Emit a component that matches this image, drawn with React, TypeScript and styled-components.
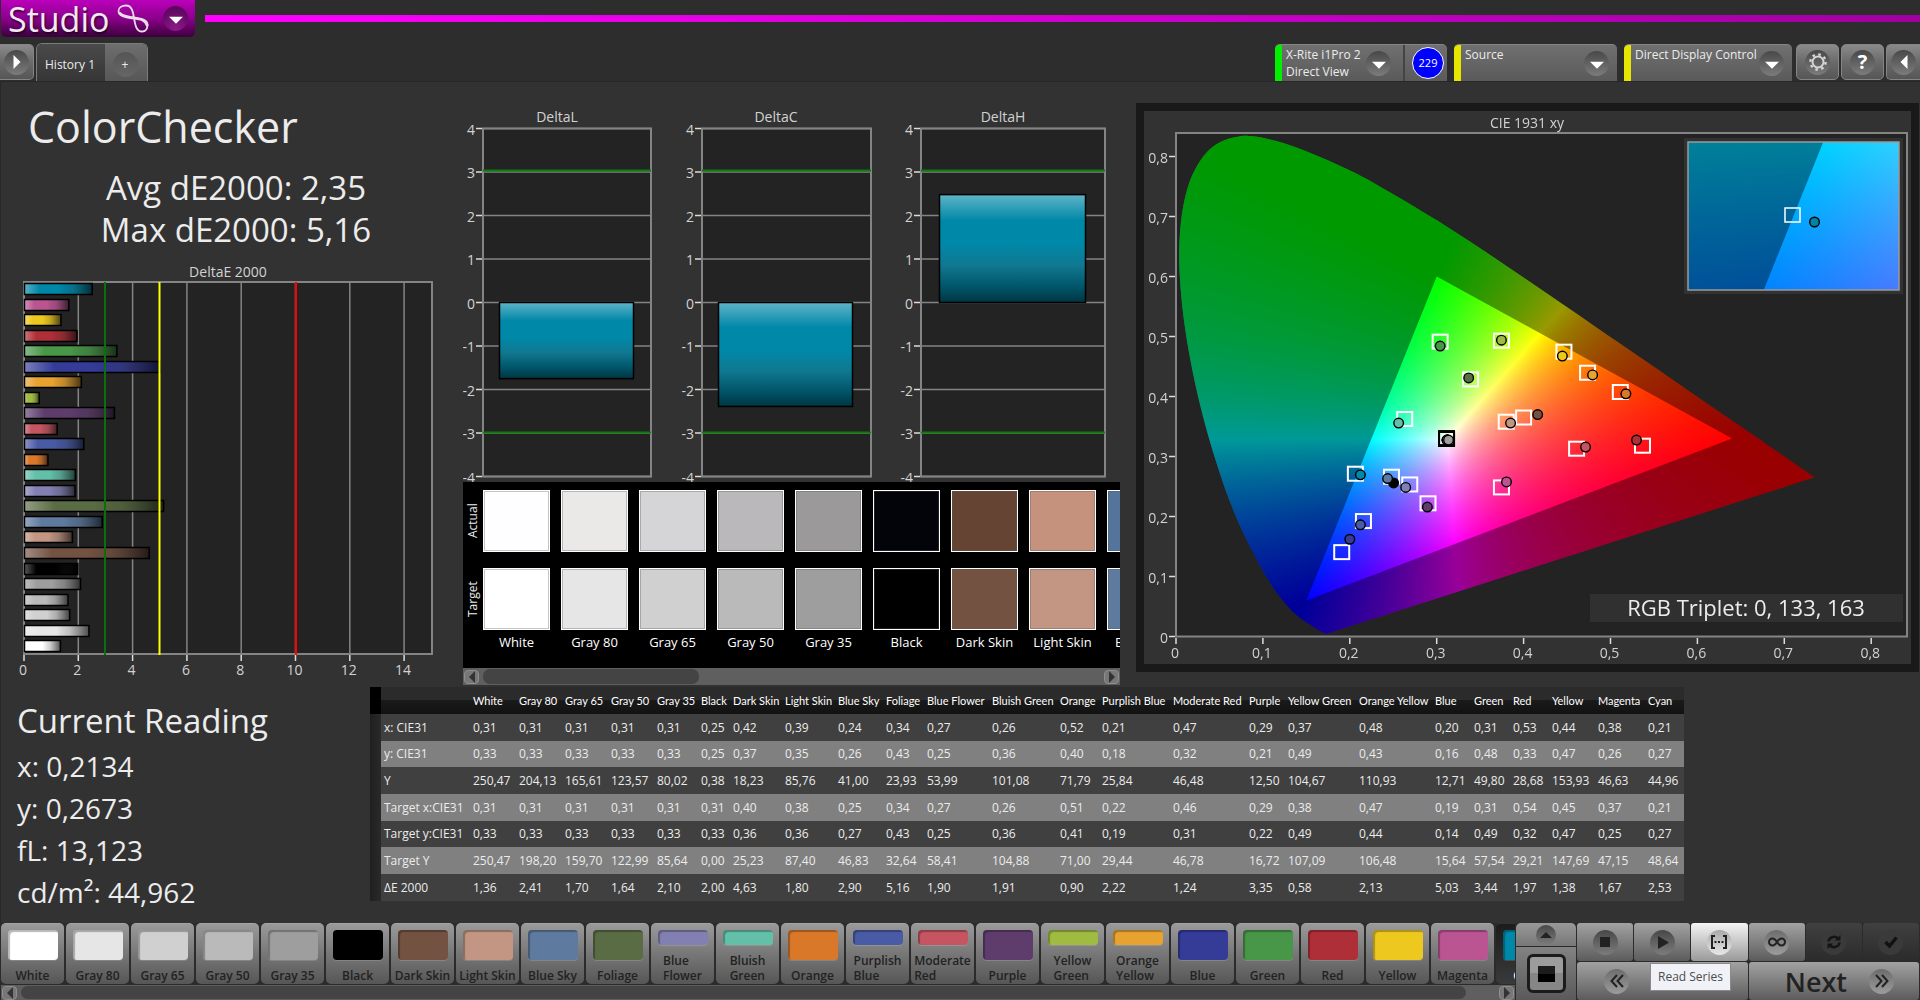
import React, { useLayoutEffect, useRef } from "react";
import styled, { createGlobalStyle, css } from "styled-components";

const FONT = `"Open Sans", "Noto Sans", "Liberation Sans", sans-serif`;

const GlobalStyle = createGlobalStyle`
  *, *::before, *::after { box-sizing: border-box; }
  body { margin: 0; background: #2d2d2d; color: #ececec; font-family: ${FONT}; }
  button { font-family: inherit; padding: 0; margin: 0; border: 0; cursor: pointer; color: inherit; }
  h1, h2, p { margin: 0; font-weight: 400; }
`;

/* ---------- data ---------- */

type Patch = {
  name: string;
  color: string;
  actual: string;
  target: [number, number];
  measured: [number, number];
  col: number;
  values: string[];
};

const p = (
  name: string,
  color: string,
  actual: string,
  target: [number, number],
  measured: [number, number],
  col: number,
  values: string
): Patch => ({ name, color, actual, target, measured, col, values: values.split(" ") });

const patches: Patch[] = [
  p("White", "#ffffff", "#fefdff", [0.3113, 0.3298], [0.312, 0.3274], 46, "0,31 0,33 250,47 0,31 0,33 250,47 1,36"),
  p("Gray 80", "#e6e6e6", "#ebe8e8", [0.3113, 0.3298], [0.312, 0.3274], 46, "0,31 0,33 204,13 0,31 0,33 198,20 2,41"),
  p("Gray 65", "#d0d0d0", "#d5d4d7", [0.3113, 0.3298], [0.312, 0.3274], 46, "0,31 0,33 165,61 0,31 0,33 159,70 1,70"),
  p("Gray 50", "#bababa", "#bab8bb", [0.3113, 0.3298], [0.312, 0.3274], 46, "0,31 0,33 123,57 0,31 0,33 122,99 1,64"),
  p("Gray 35", "#9e9e9e", "#9b9999", [0.3113, 0.3298], [0.3136, 0.3274], 44, "0,31 0,33 80,02 0,31 0,33 85,64 2,10"),
  p("Black", "#000000", "#03040a", [0.3113, 0.3298], [0.2504, 0.2559], 32, "0,25 0,25 0,38 0,31 0,33 0,00 2,00"),
  p("Dark Skin", "#735242", "#654434", [0.4, 0.365], [0.4162, 0.3699], 52, "0,42 0,37 18,23 0,40 0,36 25,23 4,63"),
  p("Light Skin", "#c29682", "#c5927e", [0.38, 0.358], [0.385, 0.3557], 53, "0,39 0,35 85,76 0,38 0,36 87,40 1,80"),
  p("Blue Sky", "#5e7b9f", "#55749c", [0.248, 0.2663], [0.2435, 0.2633], 48, "0,24 0,26 41,00 0,25 0,27 46,83 2,90"),
  p("Foliage", "#5a6c43", "#55683f", [0.339, 0.4285], [0.3368, 0.431], 41, "0,34 0,43 23,93 0,34 0,43 32,64 5,16"),
  p("Blue Flower", "#8280b2", "#7d7cb0", [0.269, 0.2534], [0.2643, 0.2485], 65, "0,27 0,25 53,99 0,27 0,25 58,41 1,90"),
  p("Bluish Green", "#64bfa9", "#60bba8", [0.2632, 0.3625], [0.2562, 0.3557], 68, "0,26 0,36 101,08 0,26 0,36 104,88 1,91"),
  p("Orange", "#d97829", "#d97829", [0.5113, 0.4075], [0.5177, 0.4044], 42, "0,52 0,40 71,79 0,51 0,41 71,00 0,90"),
  p("Purplish Blue", "#4a5ba5", "#4456a2", [0.2157, 0.1924], [0.2122, 0.1862], 71, "0,21 0,18 25,84 0,22 0,19 29,44 2,22"),
  p("Moderate Red", "#c45561", "#c45561", [0.461, 0.313], [0.4713, 0.3157], 76, "0,47 0,32 46,48 0,46 0,31 46,78 1,24"),
  p("Purple", "#5e3d6c", "#56365f", [0.29, 0.222], [0.2893, 0.2158], 39, "0,29 0,21 12,50 0,29 0,22 16,72 3,35"),
  p("Yellow Green", "#a0bb42", "#a0bb42", [0.3745, 0.493], [0.3745, 0.4938], 71, "0,37 0,49 104,67 0,38 0,49 107,09 0,58"),
  p("Orange Yellow", "#e7a22f", "#e7a22f", [0.4736, 0.4396], [0.4794, 0.4359], 76, "0,48 0,43 110,93 0,47 0,44 106,48 2,13"),
  p("Blue", "#343c98", "#343c98", [0.1907, 0.1406], [0.2, 0.1621], 39, "0,20 0,16 12,71 0,19 0,14 15,64 5,03"),
  p("Green", "#489648", "#489648", [0.304, 0.4914], [0.304, 0.484], 39, "0,31 0,48 49,80 0,31 0,49 57,54 3,44"),
  p("Red", "#af2f38", "#af2f38", [0.5368, 0.318], [0.5299, 0.3274], 39, "0,53 0,33 28,68 0,54 0,32 29,21 1,97"),
  p("Yellow", "#edc91f", "#edc91f", [0.4464, 0.4747], [0.4446, 0.4673], 46, "0,44 0,47 153,93 0,45 0,47 147,69 1,38"),
  p("Magenta", "#bb5592", "#bb5592", [0.3745, 0.2485], [0.3803, 0.2577], 50, "0,38 0,26 46,63 0,37 0,25 47,15 1,67"),
  p("Cyan", "#0088a8", "#0085a3", [0.2064, 0.2713], [0.2122, 0.2694], 39, "0,21 0,27 44,96 0,21 0,27 48,64 2,53"),
];

const rowLabels = ["x: CIE31", "y: CIE31", "Y", "Target x:CIE31", "Target y:CIE31", "Target Y", "ΔE 2000"];

const deltaE = (patch: Patch) => parseFloat(patch.values[6].replace(",", "."));

/* ---------- shell ---------- */

const Shell = styled.div`
  min-height: 100vh;
  display: flex;
  flex-direction: column;
  overflow: hidden;
  background: #2d2d2d;
`;

const TopBar = styled.header`
  display: flex;
  height: 43px;
  padding-left: 1px;
`;

const Brand = styled.button`
  display: flex;
  align-items: center;
  width: 194px;
  height: 37px;
  padding-left: 7px;
  border-radius: 0 0 5px 5px;
  background: linear-gradient(#bb00bb, #8b008b 50%, #3c003c);
  color: #f3e9f3;
  font-size: 34px;
  line-height: 36px;
  text-shadow: 1px 2px 2px rgba(0, 0, 0, 0.6);
`;

const BrandMark = styled.svg`
  width: 32px;
  height: 30px;
  margin: 0 14px 0 8px;
  flex: none;
`;

const Accent = styled.div`
  flex: 1;
  height: 7px;
  margin: 15px 0 0 10px;
  background: linear-gradient(90deg, #ff00ff, #a000a0);
`;

const TabRow = styled.nav`
  display: flex;
  height: 38px;
  align-items: stretch;
`;

const raised = css`
  border: 1px solid #858585;
  background: linear-gradient(#8a8a8a, #6a6a6a 50%, #565656);
`;

const Round = styled.span<{ $tone?: string }>`
  display: inline-flex;
  align-items: center;
  justify-content: center;
  flex: none;
  width: 25px;
  height: 25px;
  border-radius: 50%;
  background: ${(q) => q.$tone ?? "linear-gradient(#484848, #7c7c7c)"};
`;

const SquareButton = styled.button<{ $edge?: "left" | "right" }>`
  ${raised}
  display: flex;
  align-items: center;
  justify-content: center;
  height: 36px;
  margin-top: 1px;
  width: ${(q) => (q.$edge ? 34 : 43)}px;
  border-radius: ${(q) => (q.$edge === "left" ? "0 5px 5px 0" : q.$edge === "right" ? "5px 0 0 5px" : "5px")};
  ${(q) => q.$edge === "left" && "border-left: 0;"}
  ${(q) => q.$edge === "right" && "border-right: 0;"}
`;

const Tabs = styled.div`
  display: flex;
  margin-left: 2px;
  border: 1px solid #7c7c7c;
  border-bottom: 0;
  border-radius: 6px 6px 0 0;
  overflow: hidden;
`;

const Tab = styled.button<{ $active?: boolean }>`
  width: ${(q) => (q.$active ? 68 : 42)}px;
  padding: 3px 2px 0 0;
  font-size: 12px;
  white-space: nowrap;
  background: ${(q) => (q.$active ? "linear-gradient(#4a4a4a, #363636)" : "linear-gradient(#6e6e6e, #575757)")};
`;

const Devices = styled.div`
  display: flex;
  gap: 7px;
  margin-left: auto;
  margin-right: 4px;
`;

const Device = styled.div<{ $led: string; $w: number }>`
  display: flex;
  width: ${(q) => q.$w}px;
  margin-top: 1px;
  border-top: 1px solid #858585;
  border-radius: 5px 5px 0 0;
  overflow: hidden;
  background: linear-gradient(90deg, ${(q) => q.$led} 7px, transparent 7px), linear-gradient(#707070, #5a5a5a);
`;

const DeviceButton = styled.button<{ $inset: number }>`
  display: flex;
  flex: 1;
  justify-content: space-between;
  padding: 1px ${(q) => q.$inset}px 0 11px;
  background: none;
  font-size: 12px;
  line-height: 17px;
  text-align: left;
  white-space: nowrap;
`;

const DeviceArrow = styled(Round)`
  margin-top: 5px;
`;

const Counter = styled.button`
  display: flex;
  align-items: center;
  width: 44px;
  padding-left: 7px;
  border-left: 2px solid #444;
  background: none;

  span {
    width: 32px;
    height: 32px;
    border: 1px solid #fff;
    border-radius: 50%;
    background: #0000ff;
    color: #fff;
    font-size: 11px;
    line-height: 30px;
    text-align: center;
  }
`;

const Tools = styled.div`
  display: flex;
  gap: 2px;
`;

const Main = styled.main`
  flex: 1;
  border: 1px solid #282828;
  border-width: 1px 0 0 1px;
  background: #323232;
`;

const Charts = styled.div`
  display: grid;
  grid-template-columns: minmax(0, 462fr) minmax(0, 673fr) minmax(0, 784fr);
`;

const Title = styled.h1`
  margin: 21px 0 0 27px;
  font-size: 43px;
  line-height: 48px;
`;

const Stats = styled.div`
  padding: 16px 0 11px 8px;
  font-size: 33px;
  line-height: 42px;
  text-align: center;
`;

const Plot = styled.svg`
  display: block;
  width: 100%;
  height: auto;
  font-family: ${FONT};
  font-size: 14px;
`;

/* ---------- swatch strip ---------- */

const StripPanel = styled.div`
  margin-right: 16px;
  background: #000;
`;

const StripBody = styled.div`
  display: flex;
  height: 186px;
  overflow: hidden;
`;

const StripLabels = styled.div`
  display: flex;
  flex-direction: column;
  flex: none;
  width: 20px;
  gap: 16px;
  padding-top: 8px;
  font-size: 12px;

  span {
    height: 62px;
    line-height: 20px;
    writing-mode: vertical-rl;
    rotate: 180deg;
    text-align: center;
  }
`;

const StripItem = styled.div`
  display: flex;
  flex-direction: column;
  align-items: center;
  flex: none;
  width: 78px;
  padding: 8px 11px 0 0;
  gap: 16px;
  font-size: 13px;
  line-height: 18px;
  white-space: nowrap;
  color: #fff;
`;

const Chip = styled.div<{ $c: string }>`
  width: 67px;
  height: 62px;
  border: 1px solid #fff;
  box-shadow: inset 0 0 0 1px rgba(90, 90, 90, 0.35);
  background: ${(q) => q.$c};
`;

const ChipName = styled.span`
  margin-top: -13px;
`;

const ScrollTrack = styled.div<{ $h: number }>`
  display: flex;
  align-items: center;
  height: ${(q) => q.$h}px;
  padding: 0 1px;
  background: #5f5f5f;
`;

const ScrollArrow = styled.button`
  display: flex;
  align-items: center;
  justify-content: center;
  flex: none;
  width: 15px;
  height: 14px;
  border: 1px solid #8e8e8e;
  border-radius: 4px;
  background: #777;
`;

const ScrollLane = styled.div`
  flex: 1;
  height: 100%;
  padding: 1px 4px;
`;

const ScrollThumb = styled.div<{ $share: number }>`
  width: ${(q) => q.$share}%;
  height: 100%;
  border-radius: 7px;
  background: #444;
`;

/* ---------- CIE ---------- */

const CiePanel = styled.section`
  display: grid;
  align-self: start;
  margin: 21px 1px 0 0;
  border: 8px solid #191919;
  background: #323232;
`;

const CieCanvas = styled.canvas`
  grid-area: 1 / 1;
  width: 100%;
  height: auto;
`;

const CiePlot = styled(Plot)`
  grid-area: 1 / 1;
`;

/* ---------- readings and table ---------- */

const Lower = styled.div`
  display: grid;
  grid-template-columns: minmax(0, 369fr) minmax(0, 1314fr) minmax(0, 236fr);
  align-items: start;
`;

const Readings = styled.section`
  padding: 13px 0 8px 16px;
  font-size: 28px;
  line-height: 42px;
`;

const ReadingsTitle = styled.h2`
  margin-bottom: 3px;
  font-size: 33px;
  line-height: 42px;
`;

const DataTable = styled.table`
  width: 100%;
  table-layout: fixed;
  border-collapse: collapse;
  font-size: 12px;
  line-height: 16px;

  th, td {
    height: 27px;
    padding: 0 0 0 3px;
    text-align: left;
    font-weight: 400;
    white-space: nowrap;
  }
  tbody tr:nth-child(3n + 2) > * { height: 26px; }
  thead th {
    font-family: Lato, ${FONT};
    font-size: 11px;
    color: #fff;
  }
  thead tr { background: linear-gradient(#2b2b2b 50%, #1a1a1a 50%, #121212); }
  tbody tr { background: #404040; }
  tbody tr:nth-child(even) { background: #808080; }
  thead td { background: #000; }
  tbody td:first-child { background: linear-gradient(90deg, #1f1f1f, #2a2a2a); }
`;

/* ---------- bottom bar ---------- */

const Bottom = styled.footer`
  display: flex;
  height: 77px;
  gap: 1px;
  background: #2b2b2b;
`;

const PatchArea = styled.div`
  flex: 1;
  min-width: 0;
  display: flex;
  flex-direction: column;
  padding-left: 1px;
`;

const PatchRow = styled.div`
  display: flex;
  height: 62px;
  gap: 2px;
  overflow: hidden;
`;

const PatchButton = styled.button<{ $on: boolean }>`
  display: flex;
  flex-direction: column;
  align-items: center;
  justify-content: space-between;
  flex: none;
  width: 63px;
  height: 61px;
  padding: 6px 0 1px;
  border-top: 1px solid ${(q) => (q.$on ? "#333" : "#a5a5a5")};
  border-radius: 5px;
  background: ${(q) => (q.$on ? "linear-gradient(#1c1c1c, #3a3a3a)" : "linear-gradient(#9a9a9a, #777 50%, #565656)")};
  color: ${(q) => (q.$on ? "#fff" : "#222")};
  font-size: 12px;
  font-weight: 600;
  line-height: 15px;
  text-align: left;
  white-space: pre;
`;

const PatchChip = styled.span<{ $c: string; $half: boolean }>`
  width: 50px;
  height: ${(q) => (q.$half ? 15 : 30)}px;
  border-radius: 4px;
  background: ${(q) => q.$c};
  box-shadow: inset 2px 2px 1px rgba(0, 0, 0, 0.28), 0 1px 0 rgba(255, 255, 255, 0.15);
`;

const Pad = styled.div`
  display: flex;
  flex-direction: column;
  gap: 1px;
  width: 60px;
`;

const PadUp = styled.button`
  height: 23px;
  border-radius: 5px 5px 0 0;
  background: linear-gradient(#999, #777);
`;

const SmallRound = styled(Round)`
  width: 20px;
  height: 20px;
`;

const PadStop = styled.button`
  display: flex;
  align-items: center;
  justify-content: center;
  flex: 1;
  background: linear-gradient(#828282, #5a5a5a);

  span {
    width: 39px;
    height: 39px;
    padding: 9px 8px;
    border: 3px solid #1b1b1b;
    border-radius: 6px;
    background: linear-gradient(#9c9c9c 50%, #868686 50%);
  }
  span::before {
    content: "";
    display: block;
    width: 17px;
    height: 16px;
    background: linear-gradient(#1c1c1c 50%, #000 50%);
  }
`;

const Transport = styled.div`
  position: relative;
  display: grid;
  grid-template-columns: repeat(6, 1fr);
  grid-template-rows: 38px 38px;
  gap: 1px;
  width: 343px;
  padding-right: 1px;
`;

const Key = styled.button<{ $kind?: "hot" | "off" }>`
  display: flex;
  align-items: center;
  justify-content: center;
  border-radius: 3px;
  background: ${(q) =>
    q.$kind === "hot"
      ? "linear-gradient(#f4f4f4, #9a9a9a)"
      : q.$kind === "off"
        ? "linear-gradient(#404040, #2b2b2b)"
        : "linear-gradient(#a2a2a2, #5c5c5c)"};
`;

const WideKey = styled(Key)<{ $end?: boolean }>`
  grid-column: span 3;
  justify-content: ${(q) => (q.$end ? "flex-end" : "flex-start")};
  gap: 22px;
  padding: 0 25px 0 27px;
  color: #222;
  font-size: 27px;
  font-weight: 600;
`;

const Tip = styled.div`
  position: absolute;
  left: 73px;
  top: 40px;
  width: 81px;
  border: 1px solid #8a8a8a;
  background: #f1f2f8;
  color: #4c4c4c;
  font-size: 12px;
  line-height: 26px;
  text-align: center;
`;

/* ---------- icons ---------- */

const Tri = ({ dir, size = 14, fill = "#fff" }: { dir: "up" | "down" | "left" | "right"; size?: number; fill?: string }) => {
  const shapes = { up: "0,9 12,9 6,3", down: "0,4 12,4 6,10", left: "9,0 9,12 3,6", right: "3,0 3,12 9,6" };
  return (
    <svg width={size} height={size} viewBox="0 0 12 12" aria-hidden="true">
      <polygon points={shapes[dir]} fill={fill} />
    </svg>
  );
};

const Gear = () => (
  <svg width="20" height="20" viewBox="0 0 20 20" fill="none" stroke="#d6d6d6" aria-hidden="true">
    <circle cx="10" cy="10" r="5.500" strokeWidth="2" />
    <circle cx="10" cy="10" r="7.600" strokeWidth="2.400" strokeDasharray="2.600 3.370" />
  </svg>
);

const Help = styled.span`
  color: #fff;
  font-size: 20px;
  font-weight: 700;
  line-height: 24px;
`;

const Glyph = ({ kind }: { kind: "stop" | "play" | "series" | "loop" | "refresh" | "check" | "prev" | "next" }) => (
  <svg width="18" height="18" viewBox="0 0 18 18" fill="none" stroke="#222" strokeWidth="2" aria-hidden="true">
    {kind === "stop" && <rect x="4" y="4" width="10" height="10" fill="#222" stroke="none" />}
    {kind === "play" && <polygon points="5,3 16,9.5 5,16" fill="#222" stroke="none" />}
    {kind === "series" && (
      <>
        <path d="M5 3H2V15H5M13 3H16V15H13" />
        <path d="M4.5 9H13.5" strokeWidth="2" strokeDasharray="2 1.5" />
      </>
    )}
    {kind === "loop" && (
      <path d="M9 9C7.5 6.5 6.2 5.5 4.5 5.5A3.5 3.5 0 0 0 4.5 12.5C6.2 12.5 7.5 11.5 9 9C10.5 6.5 11.8 5.5 13.5 5.5A3.5 3.5 0 0 1 13.5 12.5C11.8 12.5 10.5 11.5 9 9Z" />
    )}
    {kind === "refresh" && (
      <g stroke="#141414" strokeWidth="2.5">
        <path d="M3.5 8.5A5.5 5 0 0 1 13 5.5M14.5 9.5A5.5 5 0 0 1 5 12.5" />
        <path d="M15.5 2V7.5H10ZM2.5 16V10.5H8Z" fill="#141414" stroke="none" />
      </g>
    )}
    {kind === "check" && <path d="M3.5 9L7.5 13L14.5 4.5" stroke="#111" strokeWidth="3.5" />}
    {kind === "prev" && <path d="M9 3L3.5 9L9 15M15 3L9.5 9L15 15" />}
    {kind === "next" && <path d="M3 3L8.5 9L3 15M9 3L14.5 9L9 15" />}
  </svg>
);

/* ---------- charts ---------- */

const GRID = "#848484";
const LABEL = "#d2d2d2";

const DeltaEChart = () => {
  const x0 = 24;
  const unit = 27.15;
  return (
    <Plot viewBox="1 262 462 425" role="img" aria-label="DeltaE 2000">
      <defs>
        <linearGradient id="sheenH">
          <stop offset="0" stopColor="#fff" stopOpacity="0.35" />
          <stop offset="0.22" stopColor="#fff" stopOpacity="0" />
          <stop offset="0.5" stopColor="#000" stopOpacity="0" />
          <stop offset="0.7" stopColor="#222" stopOpacity="0.2" />
          <stop offset="1" stopColor="#000" stopOpacity="0.68" />
        </linearGradient>
      </defs>
      <text x="228" y="277" textAnchor="middle" fill={LABEL}>DeltaE 2000</text>
      <rect x={x0} y="282" width="408" height="372" fill="#232323" stroke={GRID} strokeWidth="2" />
      {[0, 2, 4, 6, 8, 10, 12, 14].map((v) => (
        <g key={v}>
          {v > 0 && <path d={`M${x0 + v * unit} 282V654`} stroke={GRID} strokeWidth="1.5" />}
          <path d={`M${x0 + v * unit} 655V661`} stroke="#ddd" strokeWidth="1.5" />
          <text x={x0 - 1 + v * unit} y="675" textAnchor="middle" fill={LABEL}>{v}</text>
        </g>
      ))}
      {[...patches].reverse().map((patch, i) => {
        const box = { x: x0 + 0.5, y: Math.round(283 + i * 15.53) + 0.5, width: deltaE(patch) * unit - 1, height: 11 };
        return (
          <g key={patch.name}>
            <rect {...box} fill={patch.color} />
            <rect {...box} fill="url(#sheenH)" stroke="#000" strokeWidth="1.5" />
          </g>
        );
      })}
      <path d="M105 282V655" stroke="#0b700b" strokeWidth="2" />
      <path d="M159.5 282V655" stroke="#ffff00" strokeWidth="2" />
      <path d="M296 282V655" stroke="#ff0000" strokeWidth="2" />
    </Plot>
  );
};

const deltas = [
  { name: "DeltaL", x: 483, w: 168, bar: 499, barW: 134, v: -1.75, cx: 557 },
  { name: "DeltaC", x: 702, w: 169, bar: 718, barW: 134, v: -2.39, cx: 776 },
  { name: "DeltaH", x: 921, w: 184, bar: 939, barW: 146, v: 2.48, cx: 1003 },
];

const DeltaCharts = () => {
  const y = (v: number) => 302.5 - v * 43.5;
  return (
    <Plot viewBox="463 82 673 400" role="img" aria-label="DeltaL, DeltaC and DeltaH">
      <defs>
        <linearGradient id="sheenV" x1="0" y1="0" x2="0" y2="1">
          <stop offset="0" stopColor="#5fb4c8" />
          <stop offset="0.24" stopColor="#0088a8" />
          <stop offset="0.46" stopColor="#0088a8" />
          <stop offset="0.66" stopColor="#107890" />
          <stop offset="0.86" stopColor="#005468" />
          <stop offset="1" stopColor="#003542" />
        </linearGradient>
      </defs>
      {deltas.map((d) => (
        <g key={d.name}>
          <text x={d.cx} y="122" textAnchor="middle" fill={LABEL}>{d.name}</text>
          <rect x={d.x} y={y(4)} width={d.w} height={348} fill="#232323" stroke={GRID} strokeWidth="2" />
          {[4, 3, 2, 1, 0, -1, -2, -3, -4].map((v) => (
            <g key={v}>
              <path d={`M${d.x} ${y(v)}H${d.x + d.w}`} stroke={GRID} strokeWidth="1.5" />
              <path d={`M${d.x - 7} ${y(v)}H${d.x - 1}`} stroke="#ddd" strokeWidth="1.5" />
              <text x={d.x - 8} y={y(v) + 6} textAnchor="end" fill={LABEL}>{v}</text>
            </g>
          ))}
          <path d={`M${d.x} 170.5H${d.x + d.w}M${d.x} 432.5H${d.x + d.w}`} stroke="#0a7d0a" strokeWidth="2" />
          <rect
            x={d.bar + 0.5}
            y={Math.min(y(0), y(d.v))}
            width={d.barW}
            height={Math.abs(d.v) * 43.5}
            fill="url(#sheenV)"
            stroke="#000"
            strokeWidth="1.5"
          />
        </g>
      ))}
    </Plot>
  );
};

/* Spectral locus of the 1931 standard observer, as x,y pairs. */
const locus = [
  0.1741, 0.005, 0.1714, 0.0051, 0.1689, 0.0069, 0.1644, 0.0109, 0.1566, 0.0177, 0.144, 0.0297, 0.1355, 0.0399,
  0.1241, 0.0578, 0.1096, 0.0868, 0.0913, 0.1327, 0.0687, 0.2007, 0.0454, 0.295, 0.0235, 0.4127, 0.0082, 0.5384,
  0.0039, 0.6548, 0.0139, 0.7502, 0.0389, 0.812, 0.0743, 0.8338, 0.1142, 0.8262, 0.1547, 0.8059, 0.1929, 0.7816,
  0.2296, 0.7543, 0.3016, 0.6923, 0.3731, 0.6245, 0.4441, 0.5547, 0.5125, 0.4866, 0.5752, 0.4242, 0.627, 0.3725,
  0.6658, 0.334, 0.6915, 0.3083, 0.719, 0.2809, 0.7347, 0.2653,
];
const gamut = [[0.64, 0.33], [0.3, 0.6], [0.15, 0.06]];

type View = {
  left: number;
  top: number;
  w: number;
  h: number;
  toPx: (x: number, y: number) => [number, number];
  toXy: (px: number, py: number) => [number, number];
};

const makeView = (left: number, top: number, w: number, h: number, ox: number, oy: number, sx: number, sy: number): View => ({
  left, top, w, h,
  toPx: (x, y) => [ox + x * sx, oy - y * sy],
  toXy: (px, py) => [(px - ox) / sx, (oy - py) / sy],
});

/* Canvas coordinates start at the panel's inner corner. */
const mainView = makeView(32, 22, 731, 504, 32, 525.5, 869, 600);
const insetView = makeView(544, 31, 211, 148, 649.5 - 0.2092 * 3560, 105 + 0.2731 * 2460, 3560, 2460);

const chromaColor = (x: number, y: number) => {
  const yy = Math.max(y, 0.001);
  const X = x / yy;
  const Z = (1 - x - yy) / yy;
  const r = Math.max(0, 3.2406 * X - 1.5372 - 0.4986 * Z);
  const g = Math.max(0, -0.9689 * X + 1.8758 + 0.0415 * Z);
  const b = Math.max(0, 0.0557 * X - 0.204 + 1.057 * Z);
  const m = Math.max(r, g, b) || 1;
  return [(255 * r) / m, (255 * g) / m, (255 * b) / m];
};

const paintView = (ctx: CanvasRenderingContext2D, view: View) => {
  const field = document.createElement("canvas");
  field.width = view.w;
  field.height = view.h;
  const fctx = field.getContext("2d");
  if (!fctx) return;
  const image = fctx.createImageData(view.w, view.h);
  for (let j = 0; j < view.h; j++) {
    for (let i = 0; i < view.w; i++) {
      const [x, y] = view.toXy(view.left + i + 0.5, view.top + j + 0.5);
      const [r, g, b] = chromaColor(x, y);
      const k = 4 * (j * view.w + i);
      image.data[k] = r;
      image.data[k + 1] = g;
      image.data[k + 2] = b;
      image.data[k + 3] = 255;
    }
  }
  fctx.putImageData(image, 0, 0);

  ctx.save();
  ctx.beginPath();
  ctx.rect(view.left, view.top, view.w, view.h);
  ctx.fillStyle = "#232323";
  ctx.fill();
  ctx.clip();

  const pts: [number, number][] = [];
  for (let i = 0; i < locus.length; i += 2) pts.push(view.toPx(locus[i], locus[i + 1]));
  ctx.beginPath();
  ctx.moveTo(...pts[0]);
  for (let i = 0; i < pts.length - 1; i++) {
    const a = pts[Math.max(0, i - 1)];
    const b = pts[i];
    const c = pts[i + 1];
    const d = pts[Math.min(pts.length - 1, i + 2)];
    ctx.bezierCurveTo(b[0] + (c[0] - a[0]) / 6, b[1] + (c[1] - a[1]) / 6, c[0] - (d[0] - b[0]) / 6, c[1] - (d[1] - b[1]) / 6, c[0], c[1]);
  }
  ctx.closePath();
  ctx.clip();
  ctx.drawImage(field, view.left, view.top);

  ctx.beginPath();
  ctx.rect(view.left, view.top, view.w, view.h);
  gamut.forEach(([x, y], i) => {
    const [px, py] = view.toPx(x, y);
    if (i) ctx.lineTo(px, py);
    else ctx.moveTo(px, py);
  });
  ctx.closePath();
  ctx.fillStyle = "rgba(0, 0, 0, 0.4)";
  ctx.fill("evenodd");
  ctx.restore();
};

const ticks = [0, 1, 2, 3, 4, 5, 6, 7, 8];
const tickText = (n: number) => (n === 0 ? "0" : `0,${n}`);

const CieChart = () => {
  const ref = useRef<HTMLCanvasElement>(null);
  useLayoutEffect(() => {
    const ctx = ref.current?.getContext("2d");
    if (!ctx) return;
    paintView(ctx, mainView);
    ctx.fillStyle = "#323232";
    ctx.fillRect(540, 27, 219, 156);
    paintView(ctx, insetView);
  }, []);

  return (
    <CiePanel>
      <CieCanvas ref={ref} width={767} height={553} />
      <CiePlot viewBox="0 0 767 553" role="img" aria-label="CIE 1931 xy">
        <text x="383" y="17" textAnchor="middle" fill={LABEL}>CIE 1931 xy</text>
        <rect x="32" y="22" width="731" height="503.5" fill="none" stroke={GRID} strokeWidth="2" />
        {ticks.map((n) => {
          const [x, y] = mainView.toPx(n / 10, n / 10);
          return (
            <g key={n} fill={LABEL}>
              <path d={`M${x} 527V533M25 ${y}H31`} stroke="#ddd" strokeWidth="1.5" />
              <text x={x - 1} y="547" textAnchor="middle">{tickText(n)}</text>
              <text x="24" y={y + 6} textAnchor="end">{tickText(n)}</text>
            </g>
          );
        })}
        {patches.map((patch, i) => {
          const [x, y] = mainView.toPx(...patch.target);
          return <rect key={patch.name} x={x - 7.5} y={y - 7} width="15" height="14" fill="none" stroke={i < 6 ? "#000" : "#fff"} strokeWidth="2" />;
        })}
        {[5, 0, 1, 2, 3, 4, ...patches.map((_, i) => i).slice(6)].map((i) => {
          const [cx, cy] = mainView.toPx(...patches[i].measured);
          return <circle key={i} cx={cx} cy={cy} r="4.8" fill={patches[i].color} stroke="#000" strokeWidth="1.4" />;
        })}
        <rect x="544" y="31" width="211" height="148" fill="none" stroke="#9a9a9a" strokeWidth="1.5" />
        <rect x="641" y="97" width="15" height="14" fill="none" stroke="#fff" strokeWidth="1.5" />
        <circle cx="670.5" cy="111" r="4.8" fill="#0085a3" stroke="#000" strokeWidth="1.4" />
        <rect x="446" y="483" width="313" height="28" fill="#303030" />
        <text x="602" y="505" textAnchor="middle" fill="#ececec" fontSize="22">RGB Triplet: 0, 133, 163</text>
      </CiePlot>
    </CiePanel>
  );
};

/* ---------- page ---------- */

const Scroll = ({ share, h }: { share: number; h: number }) => (
  <ScrollTrack $h={h}>
    <ScrollArrow aria-label="Scroll left"><Tri dir="left" size={12} fill="#333" /></ScrollArrow>
    <ScrollLane><ScrollThumb $share={share} /></ScrollLane>
    <ScrollArrow aria-label="Scroll right"><Tri dir="right" size={12} fill="#333" /></ScrollArrow>
  </ScrollTrack>
);

const stacked = new Set(["Blue Flower", "Bluish Green", "Purplish Blue", "Moderate Red", "Yellow Green", "Orange Yellow"]);
const LIGHT = "linear-gradient(#6c6c6c, #9c9c9c)";

export default function App() {
  return (
    <Shell>
      <GlobalStyle />
      <TopBar>
        <Brand>
          Studio
          <BrandMark viewBox="0 0 32 30" fill="none" stroke="#eadcea" strokeLinecap="round" aria-hidden="true">
            <path d="M16 14C8 13 1.500 12 1.500 7C1.500 3.500 5 1.500 9 1.500C15 1.500 16 8 17 14C18 20 19 27.500 25 27.500C29 27.500 30.500 24 30.500 21C30.500 15 23 15 16 14Z" strokeWidth="1.800" />
            <path d="M3 9.500C6 13 11 13 16 13.800C23 14.800 29 15.500 30 21" strokeWidth="3" />
          </BrandMark>
          <Round $tone="radial-gradient(circle at 50% 90%, #8c1a8c, #520052)"><Tri dir="down" /></Round>
        </Brand>
        <Accent />
      </TopBar>

      <TabRow>
        <SquareButton $edge="left" aria-label="Open panel"><Round><Tri dir="right" /></Round></SquareButton>
        <Tabs>
          <Tab $active>History 1</Tab>
          <Tab aria-label="Add tab"><Round $tone="linear-gradient(#555, #666)">+</Round></Tab>
        </Tabs>
        <Devices>
          <Device $led="#00f000" $w={172}>
            <DeviceButton $inset={12}>
              <span>X-Rite i1Pro 2<br />Direct View</span>
              <DeviceArrow><Tri dir="down" /></DeviceArrow>
            </DeviceButton>
            <Counter><span>229</span></Counter>
          </Device>
          <Device $led="#e6e600" $w={163}>
            <DeviceButton $inset={8}>Source<DeviceArrow><Tri dir="down" /></DeviceArrow></DeviceButton>
          </Device>
          <Device $led="#e6e600" $w={168}>
            <DeviceButton $inset={8}>Direct Display Control<DeviceArrow><Tri dir="down" /></DeviceArrow></DeviceButton>
          </Device>
        </Devices>
        <Tools>
          <SquareButton aria-label="Settings"><Round><Gear /></Round></SquareButton>
          <SquareButton aria-label="Help"><Round><Help>?</Help></Round></SquareButton>
          <SquareButton $edge="right" aria-label="Collapse"><Round><Tri dir="left" /></Round></SquareButton>
        </Tools>
      </TabRow>

      <Main>
        <Charts>
          <section>
            <Title>ColorChecker</Title>
            <Stats>
              <p>Avg dE2000: 2,35</p>
              <p>Max dE2000: 5,16</p>
            </Stats>
            <DeltaEChart />
          </section>
          <section>
            <DeltaCharts />
            <StripPanel>
              <StripBody>
                <StripLabels><span>Actual</span><span>Target</span></StripLabels>
                {patches.slice(0, 9).map((patch) => (
                  <StripItem key={patch.name}>
                    <Chip $c={patch.actual} />
                    <Chip $c={patch.color} />
                    <ChipName>{patch.name}</ChipName>
                  </StripItem>
                ))}
              </StripBody>
              <Scroll share={35} h={17} />
            </StripPanel>
          </section>
          <CieChart />
        </Charts>

        <Lower>
          <Readings>
            <ReadingsTitle>Current Reading</ReadingsTitle>
            <p>x: 0,2134</p>
            <p>y: 0,2673</p>
            <p>fL: 13,123</p>
            <p>cd/m²: 44,962</p>
          </Readings>
          <DataTable>
            <colgroup>
              <col style={{ width: `${1100 / 1314}%` }} />
              <col style={{ width: `${8900 / 1314}%` }} />
              {patches.map((patch) => <col key={patch.name} style={{ width: `${(patch.col * 100) / 1314}%` }} />)}
            </colgroup>
            <thead>
              <tr>
                <td />
                <th />
                {patches.map((patch) => <th key={patch.name} scope="col">{patch.name}</th>)}
              </tr>
            </thead>
            <tbody>
              {rowLabels.map((label, i) => (
                <tr key={label}>
                  <td />
                  <th scope="row">{label}</th>
                  {patches.map((patch) => <td key={patch.name}>{patch.values[i]}</td>)}
                </tr>
              ))}
            </tbody>
          </DataTable>
        </Lower>
      </Main>

      <Bottom>
        <PatchArea>
          <PatchRow>
            {patches.map((patch) => (
              <PatchButton key={patch.name} $on={patch.name === "Cyan"}>
                <PatchChip $c={patch.color} $half={stacked.has(patch.name)} />
                <span>{stacked.has(patch.name) ? patch.name.replace(" ", "\n") : patch.name}</span>
              </PatchButton>
            ))}
          </PatchRow>
          <Scroll share={98} h={15} />
        </PatchArea>
        <Pad>
          <PadUp aria-label="Expand"><SmallRound><Tri dir="up" size={12} fill="#222" /></SmallRound></PadUp>
          <PadStop aria-label="Pattern window"><span /></PadStop>
        </Pad>
        <Transport>
          <Key aria-label="Stop"><Round><Glyph kind="stop" /></Round></Key>
          <Key aria-label="Read"><Round><Glyph kind="play" /></Round></Key>
          <Key aria-label="Read Series" $kind="hot"><Round $tone="linear-gradient(#a8a8a8, #e8e8e8)"><Glyph kind="series" /></Round></Key>
          <Key aria-label="Continuous"><Round $tone={LIGHT}><Glyph kind="loop" /></Round></Key>
          <Key aria-label="Refresh" $kind="off"><Round $tone="#3a3a3a"><Glyph kind="refresh" /></Round></Key>
          <Key aria-label="Accept" $kind="off"><Round $tone="#3a3a3a"><Glyph kind="check" /></Round></Key>
          <WideKey aria-label="Back"><Round $tone={LIGHT}><Glyph kind="prev" /></Round></WideKey>
          <WideKey $end>Next<Round $tone={LIGHT}><Glyph kind="next" /></Round></WideKey>
          <Tip role="tooltip">Read Series</Tip>
        </Transport>
      </Bottom>
    </Shell>
  );
}
